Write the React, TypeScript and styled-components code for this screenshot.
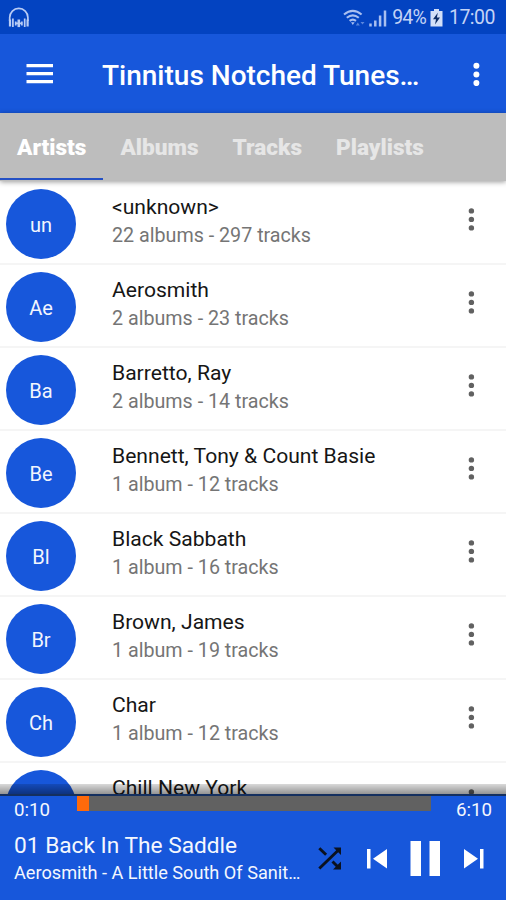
import React from "react";
import styled, { createGlobalStyle } from "styled-components";

const Global = createGlobalStyle`
  * { box-sizing: border-box; }
  body { margin: 0; background: #fff; font-family: Roboto, "Liberation Sans", sans-serif; }
`;

const Screen = styled.div`
  width: 506px;
  height: 900px;
  display: flex;
  flex-direction: column;
  overflow: hidden;
  background: #fff;
`;

const StatusBar = styled.header`
  height: 34px;
  flex: none;
  display: flex;
  align-items: center;
  padding: 1px 11px 0 8px;
  background: #0343c1;
  color: #c3d3f6;
`;

const StatusGroup = styled.div`
  margin-left: auto;
  display: flex;
  align-items: center;
`;

const StatusText = styled.span<{ $spacing: number; $gap: number }>`
  font-size: 19.5px;
  line-height: 34px;
  padding-top: 1px;
  letter-spacing: ${(p) => p.$spacing}px;
  margin-left: ${(p) => p.$gap}px;
`;

const BatteryIcon = styled.svg`
  margin-left: 4px;
`;

const AppBar = styled.div`
  height: 79px;
  flex: none;
  display: flex;
  align-items: center;
  padding: 0 25px 0 26px;
  background: #1757db;
  color: #fff;
`;

const Title = styled.h1`
  margin: 4px 0 0 49px;
  flex: 1;
  font-size: 28px;
  font-weight: 500;
  line-height: 34px;
  white-space: nowrap;
`;

const Tabs = styled.nav`
  position: relative;
  z-index: 1;
  height: 68px;
  flex: none;
  display: flex;
  background: #bdbdbd;
  box-shadow: 0 1px 5px rgba(0, 0, 0, 0.4);
`;

const Tab = styled.div<{ $active?: boolean }>`
  height: 67px;
  padding: 1px 17px 0;
  border-bottom: 2px solid ${(p) => (p.$active ? "#2450c4" : "transparent")};
  color: ${(p) => (p.$active ? "#fff" : "#e6e6e6")};
  font-size: 22.6px;
  font-weight: 900;
  line-height: 67px;
`;

const List = styled.main`
  position: relative;
  flex: 1;
  min-height: 0;
  overflow: hidden;
  padding-top: 1px;

  &::after {
    content: "";
    position: absolute;
    left: 0;
    right: 0;
    bottom: 0;
    height: 10px;
    background: linear-gradient(rgba(0, 0, 0, 0.15), rgba(0, 0, 0, 0.42));
  }
`;

const Row = styled.div`
  height: 83px;
  display: flex;
  align-items: flex-start;
  padding: 7px 30px 0 6px;
  border-bottom: 2px solid #f5f5f5;
`;

const Avatar = styled.div`
  width: 70px;
  height: 70px;
  flex: none;
  border-radius: 50%;
  background: #1757db;
  color: #f2f5fd;
  font-size: 20px;
  line-height: 72px;
  text-align: center;
`;

const RowText = styled.div`
  flex: 1;
  margin-left: 36px;
  padding-top: 4px;
  white-space: nowrap;
`;

const Name = styled.div`
  font-size: 21.1px;
  line-height: 28px;
  color: #161616;
`;

const Detail = styled.div`
  font-size: 19.7px;
  line-height: 30px;
  color: #757575;
`;

const RowMenu = styled.div`
  margin-top: 18px;
  height: 24px;
  display: flex;
  color: #616161;
`;

const Player = styled.footer`
  height: 106px;
  flex: none;
  border-top: 2px solid #15305f;
  background: #1757db;
  color: #f4f7fe;
`;

const Progress = styled.div`
  height: 31px;
  display: flex;
  align-items: flex-start;
  padding: 0 14px;
`;

const Time = styled.span<{ $width: number; $right?: boolean }>`
  width: ${(p) => p.$width}px;
  text-align: ${(p) => (p.$right ? "right" : "left")};
  font-size: 18.7px;
  line-height: 29px;
`;

const Track = styled.div`
  width: 354px;
  height: 15px;
  background: #616161;
`;

const Played = styled.div`
  width: 12px;
  height: 15px;
  background: #ff6a0b;
`;

const Controls = styled.div`
  display: flex;
  align-items: flex-start;
  padding-left: 14px;
`;

const Song = styled.div`
  width: 304px;
  padding-top: 3px;
  white-space: nowrap;
`;

const SongTitle = styled.div`
  font-size: 22.7px;
  line-height: 32px;
`;

const SongArtist = styled.div`
  font-size: 18.15px;
  line-height: 21px;
`;

const Kebab = ({ r, gap }: { r: number; gap: number }) => (
  <svg width="10" height="24" viewBox="0 0 10 24" fill="currentColor">
    <circle cx="5.400" cy={12.4 - gap} r={r} />
    <circle cx="5.400" cy="12.400" r={r} />
    <circle cx="5.400" cy={12.4 + gap} r={r} />
  </svg>
);

const artists: [string, string, string][] = [
  ["un", "<unknown>", "22 albums - 297 tracks"],
  ["Ae", "Aerosmith", "2 albums - 23 tracks"],
  ["Ba", "Barretto, Ray", "2 albums - 14 tracks"],
  ["Be", "Bennett, Tony & Count Basie", "1 album - 12 tracks"],
  ["Bl", "Black Sabbath", "1 album - 16 tracks"],
  ["Br", "Brown, James", "1 album - 19 tracks"],
  ["Ch", "Char", "1 album - 12 tracks"],
  ["", "Chill New York", ""],
];

export default function App() {
  return (
    <Screen>
      <Global />
      <StatusBar>
        <svg width="22" height="22" viewBox="0 0 22 22" fill="none" stroke="#b9ccf5" strokeWidth="1.7">
          <path d="M1.700 14V10.500a9.100 9.100 0 0 1 18.200 0V14" />
          <path d="M2 12.500v7M19.600 12.500v7" strokeWidth="2.200" />
          <path d="M4.900 11.500v8.500M16.700 11.500v8.500M7.700 14.500v4M13.900 14.500v4M8 16.300h5.600" />
          <path d="M10.800 12.500v7.600" strokeWidth="2.600" />
        </svg>
        <StatusGroup>
          <svg width="44" height="22" viewBox="0 0 44 22" fill="none" stroke="#a9bff0" strokeWidth="2.1">
            <path d="M1 7.5q8.800-7.200 17.600 0M3.800 10.800q6-4.900 12 0M6.600 13.800q3.200-2.500 6.400 0" />
            <path d="M8 15.300h3.600L9.800 18z" fill="#a9bff0" stroke="none" />
            <path d="M12.800 18.500l2-3 2 3zM17.500 15h4l-2 2.600z" fill="#5a86dc" stroke="none" />
            <path d="M27.500 16.500v3M32.300 13.500v6M37.100 8.500v11M42 3.500v16" strokeWidth="2.500" />
          </svg>
          <StatusText $gap={5} $spacing={-0.8}>94%</StatusText>
          <BatteryIcon width="13" height="20" viewBox="0 0 13 20">
            <path d="M4 1h5v2h3.500v15.500H.5V3H4z" fill="#d3dff8" />
            <path d="M7.800 4.800L3 11.300h3L5 16.500l5-7H6.900z" fill="#0d2c66" />
          </BatteryIcon>
          <StatusText $gap={6} $spacing={-0.5}>17:00</StatusText>
        </StatusGroup>
      </StatusBar>
      <AppBar>
        <svg width="27" height="20" viewBox="0 0 27 20" fill="#fff">
          <path d="M.5 0h26.500v3.300H.5zM.5 8h26.500v3.300H.5zM.5 16h26.500v3.300H.5z" />
        </svg>
        <Title>Tinnitus Notched Tunes…</Title>
        <Kebab r={3} gap={8.7} />
      </AppBar>
      <Tabs>
        <Tab $active>Artists</Tab>
        <Tab>Albums</Tab>
        <Tab>Tracks</Tab>
        <Tab>Playlists</Tab>
      </Tabs>
      <List>
        {artists.map(([initials, name, detail]) => (
          <Row key={name}>
            <Avatar>{initials}</Avatar>
            <RowText>
              <Name>{name}</Name>
              {detail && <Detail>{detail}</Detail>}
            </RowText>
            <RowMenu>
              <Kebab r={2.7} gap={8.5} />
            </RowMenu>
          </Row>
        ))}
      </List>
      <Player>
        <Progress>
          <Time $width={63}>0:10</Time>
          <Track>
            <Played />
          </Track>
          <Time $width={61} $right>6:10</Time>
        </Progress>
        <Controls>
          <Song>
            <SongTitle>01 Back In The Saddle</SongTitle>
            <SongArtist>Aerosmith - A Little South Of Sanit…</SongArtist>
          </Song>
          <svg width="188" height="60" viewBox="318 827 188 60">
            <path
              d="M319.300 848.200l6.800 6.600M319.300 868.500L338.500 850M332.500 861.500l6 6"
              stroke="#0b1220"
              strokeWidth="2.900"
              fill="none"
            />
            <path d="M333.500 847.500h7.500v7.500zM341 861.500v8h-8z" fill="#0b1220" />
            <path d="M367 849h3.500v19.500H367zM387 849v19.500L373 858.700z" fill="#fff" />
            <path d="M410.500 841h10.500v35h-10.500zM429.500 841H440v35h-10.500z" fill="#fff" />
            <path d="M464 849v19.500l14-9.800zM480 849h3.500v19.500H480z" fill="#fff" />
          </svg>
        </Controls>
      </Player>
    </Screen>
  );
}
